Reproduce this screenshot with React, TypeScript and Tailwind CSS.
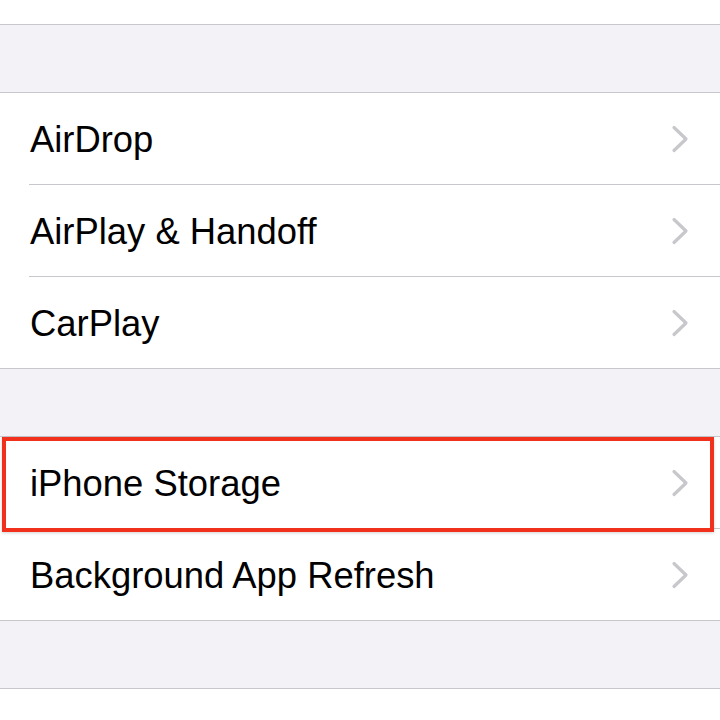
const font = { fontFamily: '"Liberation Sans", Arial, sans-serif' };

function Chevron() {
  return (
    <svg width="18" height="28" viewBox="0 0 18 28" className="shrink-0">
      <polyline
        points="3,2.5 15,14 3,25.5"
        fill="none"
        stroke="#c7c7cc"
        strokeWidth="3.2"
        strokeLinecap="round"
        strokeLinejoin="round"
      />
    </svg>
  );
}

function Row({ label, last, highlight }: { label: string; last?: boolean; highlight?: boolean }) {
  return (
    <div className={highlight ? 'relative z-10 bg-white' : 'relative bg-white'}>
      <div className="flex h-[91px] items-center justify-between pl-[30px] pr-[31px]">
        <span className="pt-[4px] text-[36.4px] leading-none text-black">{label}</span>
        <Chevron />
      </div>
      {!last && <div className="ml-[29px] h-px bg-[#c8c7cc]" />}
      {highlight && (
        <div className="pointer-events-none absolute left-[2px] right-[6px] top-0 bottom-[-3px] border-[4px] border-[#f2311c] shadow-[0_1px_3px_rgba(0,0,0,0.18)]" />
      )}
    </div>
  );
}

function Gap() {
  return <div className="h-[67px] border-y border-[#c8c7cc] bg-[#f2f2f7] box-content" />;
}

export default function App() {
  return (
    <div className="h-[720px] w-[720px] overflow-hidden bg-white" style={font}>
      <div className="h-6 bg-white" />
      <Gap />
      <Row label="AirDrop" />
      <Row label="AirPlay & Handoff" />
      <Row label="CarPlay" last />
      <Gap />
      <Row label="iPhone Storage" highlight />
      <Row label="Background App Refresh" last />
      <Gap />
      <Row label="Date & Time" />
    </div>
  );
}
